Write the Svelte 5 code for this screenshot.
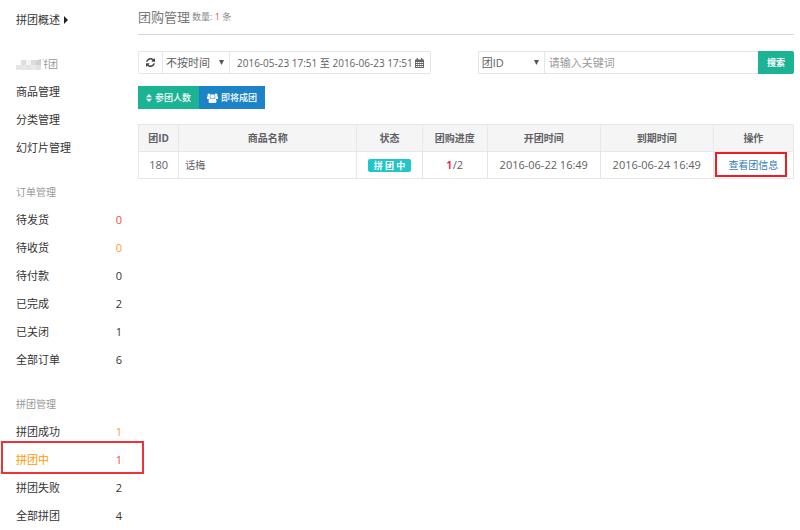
<script lang="ts">
    type Item = { label: string; count?: number; tone?: string; active?: boolean };

    const sections: { title: string; masked?: boolean; items: Item[] }[] = [
        {
            title: '拼团',
            masked: true,
            items: [{ label: '商品管理' }, { label: '分类管理' }, { label: '幻灯片管理' }]
        },
        {
            title: '订单管理',
            items: [
                { label: '待发货', count: 0, tone: 'red' },
                { label: '待收货', count: 0, tone: 'orange' },
                { label: '待付款', count: 0 },
                { label: '已完成', count: 2 },
                { label: '已关闭', count: 1 },
                { label: '全部订单', count: 6 }
            ]
        },
        {
            title: '拼团管理',
            items: [
                { label: '拼团成功', count: 1, tone: 'orange' },
                { label: '拼团中', count: 1, tone: 'red', active: true },
                { label: '拼团失败', count: 2 },
                { label: '全部拼团', count: 4 }
            ]
        }
    ];

    const teams = [
        { id: 180, name: '话梅', status: '拼 团 中', joined: 1, total: 2, start: '2016-06-22 16:49', end: '2016-06-24 16:49' }
    ];

    let timeType = $state('不按时间');
    let field = $state('团ID');
    let keyword = $state('');
</script>

{#snippet caret()}
    <svg class="caret" width="5" height="5" viewBox="0 0 5 5" aria-hidden="true"><path d="M0 0h5L2.5 5z" fill="#555" /></svg>
{/snippet}

<div class="page">
    <nav class="sidebar">
        <a class="item overview" href="#overview">
            拼团概述
            <svg width="4" height="8" viewBox="0 0 4 8" aria-hidden="true"><path d="M0 0l4 4-4 4z" fill="#222" /></svg>
        </a>
        {#each sections as section}
            <section>
                <h2>
                    {#if section.masked}
                        <svg class="mask" width="28" height="12" viewBox="0 0 28 12" aria-hidden="true">
                            <path d="M0 2h28v10H0z" fill="#fff" />
                            <path d="M0 7h5v5H0z" fill="#e6e6e6" />
                            <path d="M5 2h5v5H5z" fill="#dedede" />
                            <path d="M5 7h5v5H5z" fill="#e8e8e8" />
                            <path d="M10 2h5v5h-5z" fill="#f4f4f4" />
                            <path d="M10 7h5v5h-5z" fill="#e4e4e4" />
                            <path d="M15 2h5v5h-5z" fill="#dcdcdc" />
                            <path d="M15 7h5v5h-5z" fill="#eaeaea" />
                            <path d="M20 2h5v5h-5z" fill="#d0d0d0" />
                            <path d="M20 7h5v5h-5z" fill="#e2e2e2" />
                        </svg>
                    {/if}
                    <span>{section.title}</span>
                </h2>
                {#each section.items as item}
                    <a class="item" class:active={item.active} href="#{item.label}">
                        {item.label}
                        {#if item.count !== undefined}
                            <span class={item.tone}>{item.count}</span>
                        {/if}
                    </a>
                {/each}
            </section>
        {/each}
    </nav>

    <main>
        <header>
            <h1>团购管理</h1>
            <small>数量: <span class="red">{teams.length}</span> 条</small>
        </header>

        <div class="toolbar">
            <div class="group dates">
                <button class="refresh" aria-label="刷新">
                    <svg width="9" height="9" viewBox="0 0 1536 1536" aria-hidden="true">
                        <path fill="#444" d="M1511 928q0 5-1 7-64 268-268 434.500T764 1536q-146 0-282.500-55T238 1324l-129 129q-19 19-45 19t-45-19-19-45V960q0-26 19-45t45-19h448q26 0 45 19t19 45-19 45l-137 137q71 66 161 102t187 36q134 0 250-65t186-179q11-17 53-117 8-23 30-23h192q13 0 22.500 9.500t9.500 22.500zm25-800v448q0 26-19 45t-45 19h-448q-26 0-45-19t-19-45 19-45l138-138Q969 256 768 256q-134 0-250 65T332 500q-11 17-53 117-8 23-30 23H50q-13 0-22.500-9.500T18 608v-7q65-268 270-434.500T768 0q146 0 284 55.500T1297 212l130-129q19-19 45-19t45 19 19 45z" />
                    </svg>
                </button>
                <span class="select time">
                    <select bind:value={timeType} aria-label="时间类型">
                        <option>不按时间</option>
                        <option>开团时间</option>
                        <option>到期时间</option>
                    </select>
                    {@render caret()}
                </span>
                <button class="range">
                    2016-05-23 17:51 至 2016-06-23 17:51
                    <svg width="9" height="10" viewBox="0 0 18 20" aria-hidden="true">
                        <path fill="#666" fill-rule="evenodd" d="M1 3h2V1q0-1 1-1h1q1 0 1 1v2h6V1q0-1 1-1h1q1 0 1 1v2h2q1 0 1 1v15q0 1-1 1H1q-1 0-1-1V4q0-1 1-1zm1 5v2h3V8zm4 0v2h3V8zm4 0v2h3V8zm4 0v2h2V8zM2 12v2h3v-2zm4 0v2h3v-2zm4 0v2h3v-2zm4 0v2h2v-2zM2 16v2h3v-2zm4 0v2h3v-2zm4 0v2h3v-2zm4 0v2h2v-2z" />
                    </svg>
                </button>
            </div>

            <form class="group search" onsubmit={(e) => e.preventDefault()}>
                <span class="select field">
                    <select bind:value={field} aria-label="搜索字段">
                        <option>团ID</option>
                        <option>商品名称</option>
                    </select>
                    {@render caret()}
                </span>
                <input type="text" bind:value={keyword} placeholder="请输入关键词" aria-label="关键词" />
                <button class="submit">搜索</button>
            </form>
        </div>

        <div class="actions">
            <button class="sort">
                <svg width="6" height="8" viewBox="0 0 6 8" aria-hidden="true"><path d="M0 3.300L3 0l3 3.300zM0 4.700h6L3 8z" fill="#fff" /></svg>
                参团人数
            </button>
            <button class="soon">
                <svg width="11" height="10" viewBox="0 0 22 20" aria-hidden="true">
                    <g fill="#fff">
                        <circle cx="4" cy="4" r="3" />
                        <circle cx="18" cy="4" r="3" />
                        <circle cx="11" cy="7" r="4.500" />
                        <path d="M0 12V9q0-3 2-3l4 1q-1 4 1 5zM22 12V9q0-3-2-3l-4 1q1 4-1 5zM3 17q0-6 4-6 4 3 8 0 4 0 4 6 0 3-3 3H6q-3 0-3-3z" />
                    </g>
                </svg>
                即将成团
            </button>
        </div>

        <table>
            <thead>
                <tr>
                    <th class="id">团ID</th>
                    <th>商品名称</th>
                    <th class="short">状态</th>
                    <th class="short">团购进度</th>
                    <th class="date">开团时间</th>
                    <th class="date">到期时间</th>
                    <th class="op">操作</th>
                </tr>
            </thead>
            <tbody>
                {#each teams as team}
                    <tr>
                        <td>{team.id}</td>
                        <td class="name">{team.name}</td>
                        <td><span class="badge">{team.status}</span></td>
                        <td><b>{team.joined}</b>/{team.total}</td>
                        <td>{team.start}</td>
                        <td>{team.end}</td>
                        <td class="marked"><a href="#team-{team.id}">查看团信息</a></td>
                    </tr>
                {/each}
            </tbody>
        </table>
    </main>
</div>

<style>
    :global(body) {
        margin: 0;
        background: #fff;
    }

    .page {
        display: flex;

        font-family: 'Open Sans', 'Noto Sans CJK SC', sans-serif;
        font-size: 11px;
        line-height: 16px;
        color: #606164;
    }

    a {
        text-decoration: none;
    }

    button,
    input,
    select {
        box-sizing: border-box;
        margin: 0;
        padding: 0;

        background: #fff;
        color: inherit;
        font: inherit;

        border: 1px solid #e5e6e7;
        border-radius: 0;
    }

    .sidebar {
        display: flex;
        flex-direction: column;
        flex: none;
        box-sizing: border-box;
        width: 138px;
        padding: 6px 16px 0;
        gap: 16px;
    }

    .item {
        display: flex;
        align-items: center;
        justify-content: space-between;
        position: relative;
        height: 28px;

        color: #333;
    }

    .overview {
        justify-content: flex-start;
        gap: 4px;
    }

    h2 {
        display: flex;
        align-items: center;
        height: 28px;
        margin: 0;

        color: #999;
        font-size: 10px;
        font-weight: 400;
    }

    .mask {
        margin-right: -6px;
        z-index: 1;
    }

    .item.active {
        color: #f90;
    }

    .item.active::after {
        content: '';
        position: absolute;
        inset: -5px -22px 0 -15px;

        border: 2px solid #ee3338;
        pointer-events: none;
    }

    .red {
        color: #f04a4a;
    }

    .orange {
        color: #f93;
    }

    main {
        flex: 1;
        min-width: 0;
        padding: 0 6px 0 0;
    }

    header {
        display: flex;
        align-items: center;
        height: 34px;
        gap: 2px;

        border-bottom: 1px solid #d5d5d5;
    }

    h1 {
        margin: 0;

        color: #777;
        font-size: 13px;
        font-weight: 400;
    }

    small {
        color: #888;
        font-size: 9px;
    }

    .toolbar {
        display: flex;
        margin-top: 16px;
        gap: 47px;
    }

    .group {
        display: flex;
        height: 23px;
    }

    .group > * + * {
        margin-left: -1px;
    }

    .refresh {
        display: flex;
        align-items: center;
        justify-content: center;
        width: 25px;

        border-radius: 2px 0 0 2px;
    }

    .select {
        display: flex;
        position: relative;
    }

    .select select {
        width: 100%;
        padding: 0 3px;

        appearance: none;
    }

    .caret {
        position: absolute;
        top: 9px;
        right: 6px;

        pointer-events: none;
    }

    .time {
        width: 68px;
    }

    .field {
        flex: none;
        width: 67px;
    }

    .range {
        display: flex;
        align-items: center;
        padding: 0 6px 0 7px;
        gap: 2px;

        font-size: 10px;
        white-space: nowrap;

        border-radius: 0 2px 2px 0;
    }

    .search {
        flex: 1;
        min-width: 0;
    }

    .search input {
        flex: 1;
        min-width: 0;
        padding: 0 4px;
    }

    .search input::placeholder {
        color: #999;
        opacity: 1;
    }

    .submit {
        width: 36px;

        background: #1ab394;
        color: #fff;
        font-size: 9px;
        font-weight: 600;

        border: none;
        border-radius: 0 2px 2px 0;
    }

    .actions {
        display: flex;
        margin-top: 12px;
    }

    .actions button {
        display: flex;
        align-items: center;
        height: 23px;
        padding: 0 8px;
        gap: 3px;

        color: #fff;
        font-size: 9px;
        font-weight: 500;

        border: none;
    }

    .actions .sort {
        background: #1ab394;
    }

    .actions .soon {
        background: #1c84c6;
    }

    table {
        width: 100%;
        margin-top: 15px;

        table-layout: fixed;
        border-collapse: collapse;
    }

    th,
    td {
        height: 26px;
        padding: 0;

        text-align: center;

        border: 1px solid #e7e7e7;
    }

    th {
        background: #f5f5f6;
        font-size: 10px;
        font-weight: 700;
    }

    .id {
        width: 6%;
    }

    .short {
        width: 9.8%;
    }

    .date {
        width: 17.1%;
    }

    .op {
        width: 12.1%;
    }

    .name {
        padding-left: 6px;

        font-size: 10px;
        text-align: left;
    }

    .badge {
        display: inline-block;
        padding: 0 6px;

        background: #23c6c8;
        color: #fff;
        font-size: 9px;
        font-weight: 700;
        line-height: 13px;

        border-radius: 2px;
    }

    td b {
        color: #f03;
        font-weight: 600;
    }

    .marked {
        position: relative;

        font-size: 10px;
    }

    .marked a {
        color: #337ab7;
    }

    .marked::after {
        content: '';
        position: absolute;
        inset: 0 6px 1px 1px;

        border: 2px solid #ee1c25;
        pointer-events: none;
    }
</style>
